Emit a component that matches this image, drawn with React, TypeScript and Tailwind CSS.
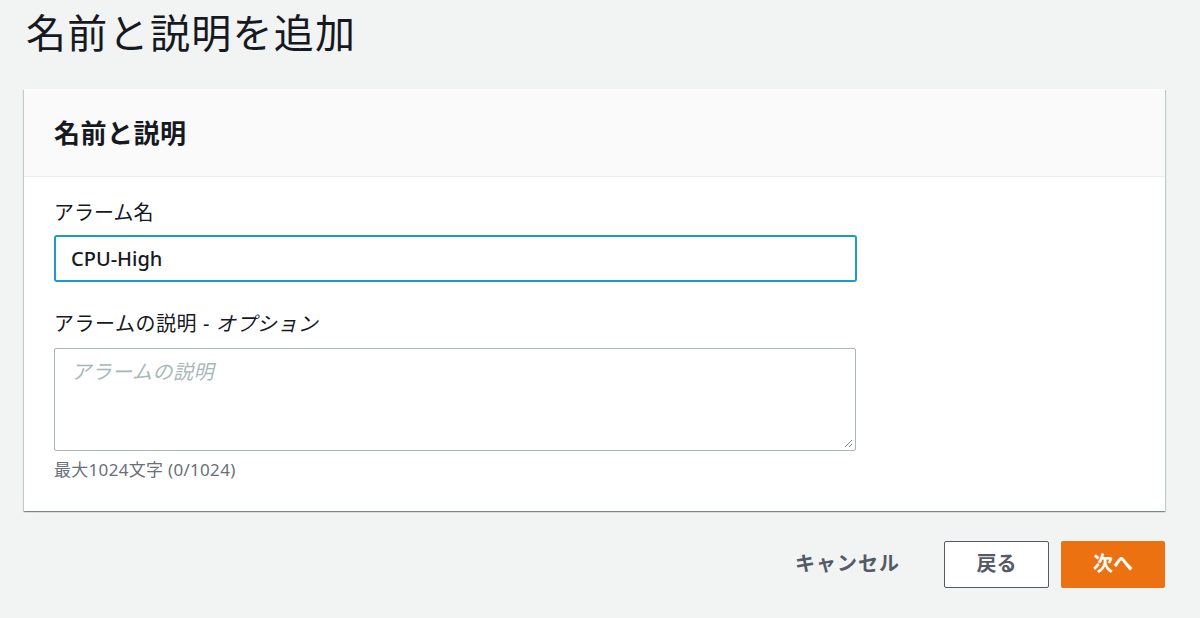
import React from 'react';

const font = { fontFamily: '"Noto Sans", "Noto Sans CJK JP", sans-serif' };

export default function App() {
  return (
    <div className="min-h-screen w-full bg-[#f2f3f3] pl-[24px] pr-[35px] text-[#16191f]" style={font}>
      {/* Page title */}
      <h1 className="pl-[2px] pt-[5px] h-[89px] text-[40px] leading-[56px] font-normal tracking-[1.3px] text-[#16191f]">
        名前と説明を追加
      </h1>

      {/* Card */}
      <div className="bg-white shadow-[0_1px_1px_0_rgba(0,28,36,0.3),1px_1px_1px_0_rgba(0,28,36,0.15),-1px_1px_1px_0_rgba(0,28,36,0.15)]">
        <div className="h-[88px] bg-[#fafafa] border-b border-[#eaeded] flex items-center px-[30px]">
          <h2 className="text-[26px] font-bold leading-none tracking-[0.5px]">名前と説明</h2>
        </div>

        <div className="px-[30px] pt-[22px] pb-[28px]">
          <label className="block text-[20px] leading-[28px] text-[#16191f]">アラーム名</label>
          <div className="mt-[8px] w-[803px] h-[47px] border-2 border-[#1d9bc7] rounded-[3px] flex items-center px-[15px]">
            <span className="text-[20px] text-[#16191f] font-medium">CPU-High</span>
          </div>

          <label className="block mt-[28px] text-[20px] leading-[28px] text-[#16191f] tracking-[0.5px]">
            アラームの説明<span className="mx-[6px]">-</span><span className="italic">オプション</span>
          </label>
          <div className="relative mt-[10px] w-[802px] h-[103px] border border-[#aab7b8] rounded-[2px] px-[16px] pt-[8px]">
            <span className="italic text-[20px] tracking-[0.5px] text-[#aab7b8]">アラームの説明</span>
            <svg className="absolute right-[2px] bottom-[2px]" width="10" height="10" viewBox="0 0 10 10">
              <path d="M9 2 L2 9 M9 6 L6 9" stroke="#7d8998" strokeWidth="1" fill="none" />
            </svg>
          </div>
          <p className="mt-[6px] text-[17px] tracking-[0.3px] text-[#687078]">最大1024文字 (0/1024)</p>
        </div>
      </div>

      {/* Actions */}
      <div className="flex justify-end items-center mt-[30px] gap-[12px]">
        <button className="text-[20px] tracking-[1px] font-bold text-[#545b64] mr-[32px]">キャンセル</button>
        <button className="w-[105px] h-[47px] bg-white border border-[#545b64] rounded-[2px] text-[20px] font-bold text-[#545b64]">
          戻る
        </button>
        <button className="w-[104px] h-[47px] bg-[#ec7211] rounded-[2px] text-[20px] font-bold text-white">
          次へ
        </button>
      </div>
    </div>
  );
}
